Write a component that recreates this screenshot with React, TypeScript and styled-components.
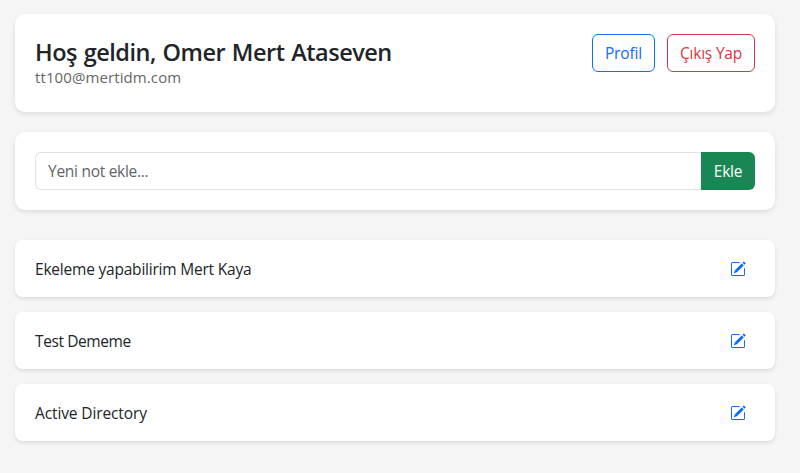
import React from "react";
import styled, { createGlobalStyle } from "styled-components";
import { BsPencilSquare } from "react-icons/bs";

const GlobalStyle = createGlobalStyle`
  *, *::before, *::after { box-sizing: border-box; }
  body {
    margin: 0;
    background: #f5f5f5;
    color: #212529;
    font: 16px/24px "Segoe UI", "Open Sans", "Noto Sans", sans-serif;
  }
`;

const Page = styled.main`
  width: 775px;
  height: 473px;
  padding: 14px 0 0 15px;
`;

const Card = styled.section`
  padding: 20px;
  margin-bottom: 20px;
  border-radius: 10px;
  background: #fff;
  box-shadow: 0 2px 5px rgba(0, 0, 0, 0.1);
`;

const Header = styled(Card)`
  display: flex;
  justify-content: space-between;
  align-items: flex-start;
  height: 98px;
`;

const Fit = styled.span<{ $spacing?: number }>`
  letter-spacing: ${(p) => p.$spacing ?? 0}px;
  white-space: nowrap;
`;

const Title = styled.h1`
  margin: 4px 0 0;
  font-size: 23.5px;
  line-height: 29px;
  font-weight: 600;
  word-spacing: 1px;
`;

const Email = styled.p`
  margin: -1px 0 0;
  color: #666;
  font-size: 15px;
  line-height: 22px;
`;

const Actions = styled.div`
  display: flex;
  gap: 12px;
`;

const OutlineButton = styled.button<{ $color: string; $width: number }>`
  width: ${(p) => p.$width}px;
  height: 38px;
  padding: 0;
  border: 1px solid ${(p) => p.$color};
  border-radius: 6px;
  background: transparent;
  color: ${(p) => p.$color};
  font: inherit;
  font-size: 15.5px;
`;

const InputGroup = styled.form`
  display: flex;
  height: 38px;
`;

const NoteInput = styled.input`
  flex: 1;
  min-width: 0;
  padding: 6px 12px;
  border: 1px solid #dee2e6;
  border-right: 0;
  border-radius: 6px 0 0 6px;
  font: inherit;
  font-size: 15.5px;
  &::placeholder { color: #5f6468; opacity: 1; letter-spacing: -0.28px; }
`;

const AddButton = styled.button`
  width: 54px;
  padding: 0;
  border: 0;
  border-radius: 0 6px 6px 0;
  background: #198754;
  color: #fff;
  font: inherit;
  font-size: 15.5px;
`;

const Notes = styled.ul`
  display: grid;
  gap: 15px;
  margin: 30px 0 0;
  padding: 0;
  list-style: none;
`;

const Note = styled.li`
  display: flex;
  align-items: center;
  justify-content: space-between;
  height: 57px;
  padding: 1px 29px 0 20px;
  border-radius: 8px;
  background: #fff;
  box-shadow: 0 2px 4px rgba(0, 0, 0, 0.1);
  font-size: 15.5px;
`;

const EditButton = styled.button`
  display: flex;
  margin-bottom: 1px;
  padding: 0;
  border: 0;
  background: transparent;
  color: #0d6efd;
`;

const notes = [
  { text: "Ekeleme yapabilirim Mert Kaya", spacing: -0.21 },
  { text: "Test Dememe", spacing: -0.4 },
  { text: "Active Directory", spacing: -0.12 },
];

export default function App() {
  return (
    <>
      <GlobalStyle />
      <Page>
        <Header>
          <div>
            <Title><Fit $spacing={-0.48}>Hoş geldin, Omer Mert Ataseven</Fit></Title>
            <Email><Fit $spacing={0.1}>tt100@mertidm.com</Fit></Email>
          </div>
          <Actions>
            <OutlineButton $color="#0d6efd" $width={63}><Fit $spacing={-0.15}>Profil</Fit></OutlineButton>
            <OutlineButton $color="#dc3545" $width={88}><Fit $spacing={-0.2}>Çıkış Yap</Fit></OutlineButton>
          </Actions>
        </Header>
        <Card>
          <InputGroup>
            <NoteInput placeholder="Yeni not ekle..." />
            <AddButton type="button"><Fit $spacing={-0.25}>Ekle</Fit></AddButton>
          </InputGroup>
        </Card>
        <Notes>
          {notes.map((note) => (
            <Note key={note.text}>
              <Fit $spacing={note.spacing}>{note.text}</Fit>
              <EditButton aria-label="Düzenle"><BsPencilSquare size={16} /></EditButton>
            </Note>
          ))}
        </Notes>
      </Page>
    </>
  );
}
